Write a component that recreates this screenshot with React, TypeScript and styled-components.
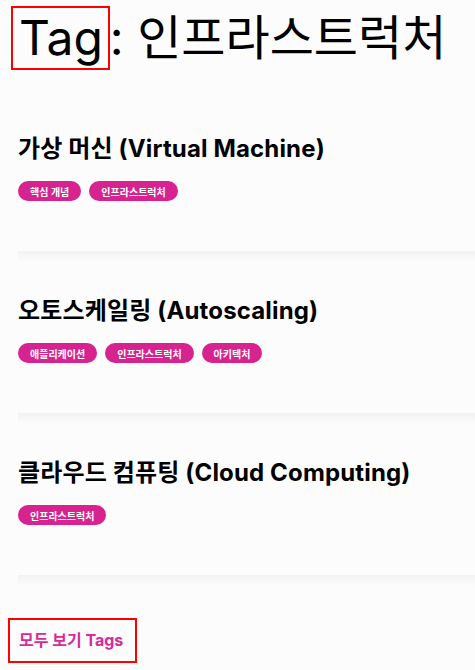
import { createGlobalStyle, styled } from 'styled-components';

const GlobalStyle = createGlobalStyle`
  html, body {
    margin: 0;
    padding: 0;
    background: #fdfcfd;
  }
  body {
    font-family: Inter, "Noto Sans CJK KR", sans-serif;
    color: #000;
  }
`;

const Page = styled.div`
  padding: 6px 0 20px 0;
  overflow: hidden;
`;

const Heading = styled.h1`
  margin: 0 0 0 11px;
  font-size: 48px;
  font-weight: 400;
  line-height: 60px;
  white-space: nowrap;
`;

const Marked = styled.span`
  display: inline-block;
  padding: 0 5px 0 6px;
  border: 2px solid #ff0000;
`;

const List = styled.div`
  margin: 29px 0 0 18px;
  display: flex;
  flex-direction: column;
`;

const Card = styled.article`
  padding-top: 34px;
`;

const Title = styled.h2`
  margin: 0;
  font-size: 24px;
  font-weight: 700;
  line-height: 32px;
  letter-spacing: 0.15px;
  white-space: nowrap;
`;

const Tags = styled.div`
  display: flex;
  gap: 8px;
  margin-top: 16px;
  padding-bottom: 50px;
`;

const Pill = styled.span`
  display: inline-flex;
  align-items: center;
  height: 20px;
  padding: 0 12px;
  border-radius: 10px;
  background: #d6238f;
  color: #fff;
  font-size: 10px;
  font-weight: 600;
  white-space: nowrap;
`;

const Divider = styled.div`
  height: 10px;
  background: linear-gradient(#f2f2f2, #fbfbfb);
`;

const AllLink = styled.a`
  display: inline-block;
  margin: 33px 0 0 8px;
  padding: 11px 12px 11px 9px;
  border: 2px solid #ff0000;
  color: #d42d97;
  font-size: 16px;
  font-weight: 700;
  line-height: 19px;
  text-decoration: none;
`;

const posts = [
  { title: '가상 머신 (Virtual Machine)', tags: ['핵심 개념', '인프라스트럭처'] },
  { title: '오토스케일링 (Autoscaling)', tags: ['애플리케이션', '인프라스트럭처', '아키텍처'] },
  { title: '클라우드 컴퓨팅 (Cloud Computing)', tags: ['인프라스트럭처'] },
];

const App = () => {
  return (
    <Page>
      <GlobalStyle />
      <Heading>
        <Marked>Tag</Marked>: 인프라스트럭처
      </Heading>
      <List>
        {posts.map((post) => (
          <Card key={post.title}>
            <Title>{post.title}</Title>
            <Tags>
              {post.tags.map((tag) => (
                <Pill key={tag}>{tag}</Pill>
              ))}
            </Tags>
            <Divider />
          </Card>
        ))}
      </List>
      <AllLink href="#">모두 보기 Tags</AllLink>
    </Page>
  );
};

export default App;
